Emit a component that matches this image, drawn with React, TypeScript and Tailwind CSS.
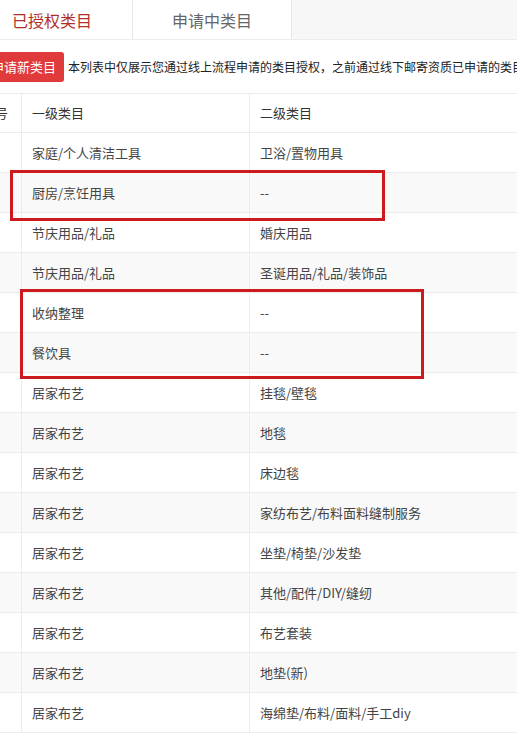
const rows: [string, string][] = [
  ["家庭/个人清洁工具", "卫浴/置物用具"],
  ["厨房/烹饪用具", "--"],
  ["节庆用品/礼品", "婚庆用品"],
  ["节庆用品/礼品", "圣诞用品/礼品/装饰品"],
  ["收纳整理", "--"],
  ["餐饮具", "--"],
  ["居家布艺", "挂毯/壁毯"],
  ["居家布艺", "地毯"],
  ["居家布艺", "床边毯"],
  ["居家布艺", "家纺布艺/布料面料缝制服务"],
  ["居家布艺", "坐垫/椅垫/沙发垫"],
  ["居家布艺", "其他/配件/DIY/缝纫"],
  ["居家布艺", "布艺套装"],
  ["居家布艺", "地垫(新)"],
  ["居家布艺", "海绵垫/布料/面料/手工diy"],
];

export default function App() {
  return (
    <div
      className="relative h-[735px] w-[517px] overflow-hidden bg-white text-[#333]"
      style={{ fontFamily: '"Microsoft YaHei", "Noto Sans CJK SC", sans-serif' }}
    >
      <div className="-ml-[28px] w-[900px]">
        {/* Tabs */}
        <div className="flex h-[40px] border-b border-[#ececec] bg-[#f7f7f7]">
          <div className="flex w-[160px] items-center justify-center bg-white text-[16px] text-[#b0302c]">
            已授权类目
          </div>
          <div className="flex w-[160px] items-center justify-center border-x border-[#e6e6e6] bg-white text-[16px] text-[#666]">
            申请中类目
          </div>
        </div>

        {/* Toolbar */}
        <div className="flex h-[53px] items-center gap-[4px] pl-[11px]">
          <button className="h-[30px] rounded-[3px] bg-[#e13a3a] px-[8px] text-[13px] text-white">
            申请新类目
          </button>
          <span className="whitespace-nowrap text-[12px] text-[#222]">
            本列表中仅展示您通过线上流程申请的类目授权，之前通过线下邮寄资质已申请的类目授权请联系小二
          </span>
        </div>

        {/* Table */}
        <div className="border-t border-[#ececec] text-[13px]">
          <div className="flex h-[39px] items-center border-b border-[#ececec]">
            <div className="flex h-full w-[50px] items-center border-r border-[#ececec] pl-[10px]">序号</div>
            <div className="flex h-full w-[228px] items-center border-r border-[#ececec] pl-[10px]">一级类目</div>
            <div className="flex h-full flex-1 items-center pl-[10px]">二级类目</div>
          </div>
          {rows.map(([a, b], i) => (
            <div
              key={i}
              className={`flex h-[40px] items-center border-b border-[#ececec] text-[#444] ${
                i % 2 === 1 ? "bg-[#f9f9f9]" : "bg-white"
              }`}
            >
              <div className="h-full w-[50px] border-r border-[#ececec]" />
              <div className="flex h-full w-[228px] items-center border-r border-[#ececec] pl-[10px]">{a}</div>
              <div className="flex h-full flex-1 items-center pl-[10px]">{b}</div>
            </div>
          ))}
        </div>
      </div>

      {/* Annotation boxes */}
      <div className="pointer-events-none absolute left-[10px] top-[170px] h-[51px] w-[375px] border-[3px] border-[#cc1a1f]" />
      <div className="pointer-events-none absolute left-[20px] top-[289px] h-[90px] w-[404px] border-[3px] border-[#cc1a1f]" />
    </div>
  );
}
